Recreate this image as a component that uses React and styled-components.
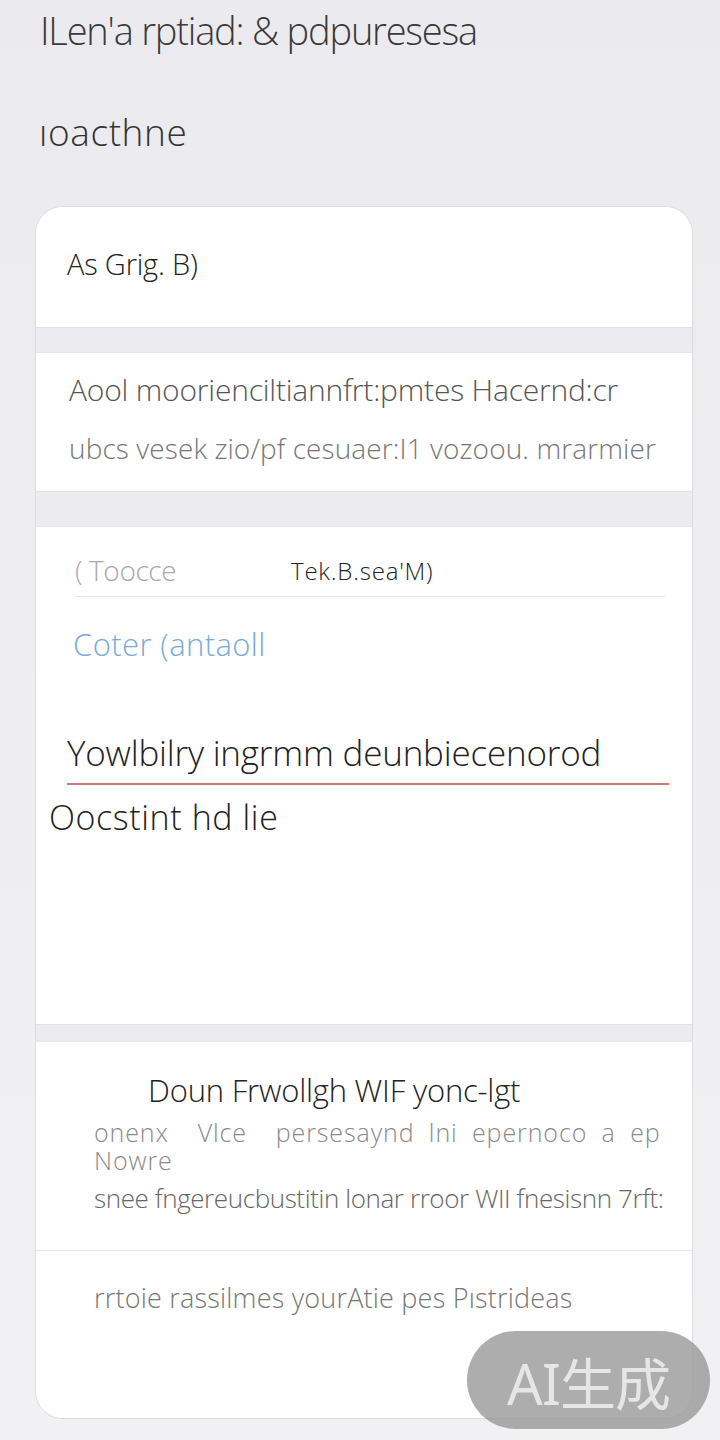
import React from "react";
import styled, { createGlobalStyle } from "styled-components";

const GlobalStyle = createGlobalStyle`
  html, body {
    margin: 0;
    padding: 0;
    background: #ececf0;
  }
  body {
    font-family: "Open Sans", "Noto Sans", "Noto Sans CJK SC", sans-serif;
    color: #333;
  }
`;

const Page = styled.div`
  position: relative;
  width: 720px;
  min-height: 1440px;
  box-sizing: border-box;
  padding: 6px 27px 22px 35px;
  background: linear-gradient(180deg, #ebebef 0%, #f1f1f3 100%);
`;

const Title = styled.h1`
  margin: 0 0 0 5px;
  font-size: 38px;
  font-weight: 300;
  letter-spacing: -1.2px;
  color: #3a3a3a;
  line-height: 48px;
`;

const Subtitle = styled.h2`
  margin: 58px 0 0 4px;
  font-size: 37px;
  font-weight: 300;
  letter-spacing: 0.6px;
  color: #333;
  line-height: 40px;
`;

const Card = styled.div`
  margin-top: 54px;
  background: #fff;
  border: 1px solid #dcdce0;
  border-radius: 28px;
  overflow: hidden;
  display: flex;
  flex-direction: column;
`;

const Section = styled.div`
  background: #fff;
  padding: ${(p) => p.$pad || "0"};
  min-height: ${(p) => p.$h || 0}px;
  box-sizing: border-box;
  display: flex;
  flex-direction: column;
`;

const Band = styled.div`
  height: ${(p) => p.$h}px;
  background: #ececf0;
  border-top: 1px solid #e2e2e6;
  border-bottom: 1px solid #e6e6ea;
  box-sizing: border-box;
`;

const Rule = styled.div`
  height: 1px;
  background: #e8e8ec;
`;

const Text = styled.div`
  font-size: ${(p) => p.$size}px;
  color: ${(p) => p.$color || "#333"};
  font-weight: ${(p) => p.$weight || 300};
  line-height: ${(p) => p.$lh};
  margin: ${(p) => p.$m || "0"};
  letter-spacing: ${(p) => p.$ls || "-0.2px"};
  word-spacing: ${(p) => p.$ws || "0"};
  white-space: ${(p) => (p.$wrap ? "normal" : "nowrap")};
`;

const FieldRow = styled.div`
  display: flex;
  align-items: center;
  margin: 0 27px 0 39px;
  padding-bottom: 8px;
  border-bottom: 1px solid #e8e8ec;
`;

const FieldLabel = styled.span`
  width: 216px;
  font-size: 28px;
  line-height: 35px;
  font-weight: 300;
  letter-spacing: -0.4px;
  color: #a8a8a8;
`;

const FieldValue = styled.span`
  font-size: 24px;
  line-height: 35px;
  font-weight: 300;
  color: #222;
  letter-spacing: 0.8px;
`;

const Underlined = styled.div`
  margin: 70px 23px 0 31px;
  padding-bottom: 8px;
  border-bottom: 2px solid #cf7a78;
  font-size: 35px;
  font-weight: 300;
  color: #222;
  letter-spacing: -0.2px;
  line-height: 44px;
`;

const Badge = styled.div`
  position: absolute;
  right: 10px;
  bottom: 12px;
  width: 243px;
  height: 98px;
  border-radius: 49px;
  background: rgba(150, 150, 150, 0.78);
  display: flex;
  align-items: center;
  justify-content: center;
  color: #e6e6e6;
  font-size: 56px;
  letter-spacing: -1px;
  font-family: "Noto Sans", "Noto Sans CJK SC", sans-serif;
  font-weight: 400;
`;

export default function App() {
  return (
    <>
      <GlobalStyle />
      <Page>
        <Title>ILen'a rptiad: &amp; pdpuresesa</Title>
        <Subtitle>ıoacthne</Subtitle>
        <Card>
          <Section $h={120} $pad="40px 0 0 31px">
            <Text $size={29} $lh="34px" $color="#222">As Grig. B)</Text>
          </Section>
          <Band $h={26} />
          <Section $h={138} $pad="20px 0 0 33px">
            <Text $size={30} $lh="34px" $color="#555">Aool moorienciltiannfrt:pmtes Hacernd:cr</Text>
            <Text $size={28} $lh="31px" $color="#777" $m="26px 0 0 0" $ls="0.1px">ubcs vesek zio/pf cesuaer:I1 vozoou. mrarmier</Text>
          </Section>
          <Band $h={36} />
          <Section $h={497} $pad="26px 0 0 0">
            <FieldRow>
              <FieldLabel>( Toocce</FieldLabel>
              <FieldValue>Tek.B.sea'M)</FieldValue>
            </FieldRow>
            <Text $size={31} $lh="34px" $color="#7aaad8" $m="30px 0 0 37px" $ls="0.4px">Coter (antaoll</Text>
            <Underlined>Yowlbilry ingrmm deunbiecenorod</Underlined>
            <Text $size={34} $lh="36px" $color="#222" $m="14px 0 0 13px" $ls="0.6px">Oocstint hd lie</Text>
          </Section>
          <Band $h={18} />
          <Section $h={208} $pad="30px 28px 0 58px">
            <Text $size={31} $lh="36px" $color="#222" $m="0 0 0 54px">Doun Frwollgh WIF yonc-lgt</Text>
            <Text $size={25} $lh="28px" $color="#8a8a8a" $wrap $m="10px 0 0 0" $ls="0.9px" $ws="7px">
              onenx&nbsp; Vlce&nbsp; persesaynd lni epernoco a ep Nowre
            </Text>
            <Text $size={26} $lh="29px" $color="#666" $m="10px 0 0 0" $ls="-0.4px">snee fngereucbustitin lonar rroor WII fnesisnn 7rft:</Text>
          </Section>
          <Rule />
          <Section $h={167} $pad="32px 0 0 58px">
            <Text $size={27} $lh="29px" $color="#777" $ls="0.2px">rrtoie rassilmes yourAtie pes Pıstrideas</Text>
          </Section>
        </Card>
        <Badge>AI生成</Badge>
      </Page>
    </>
  );
}
